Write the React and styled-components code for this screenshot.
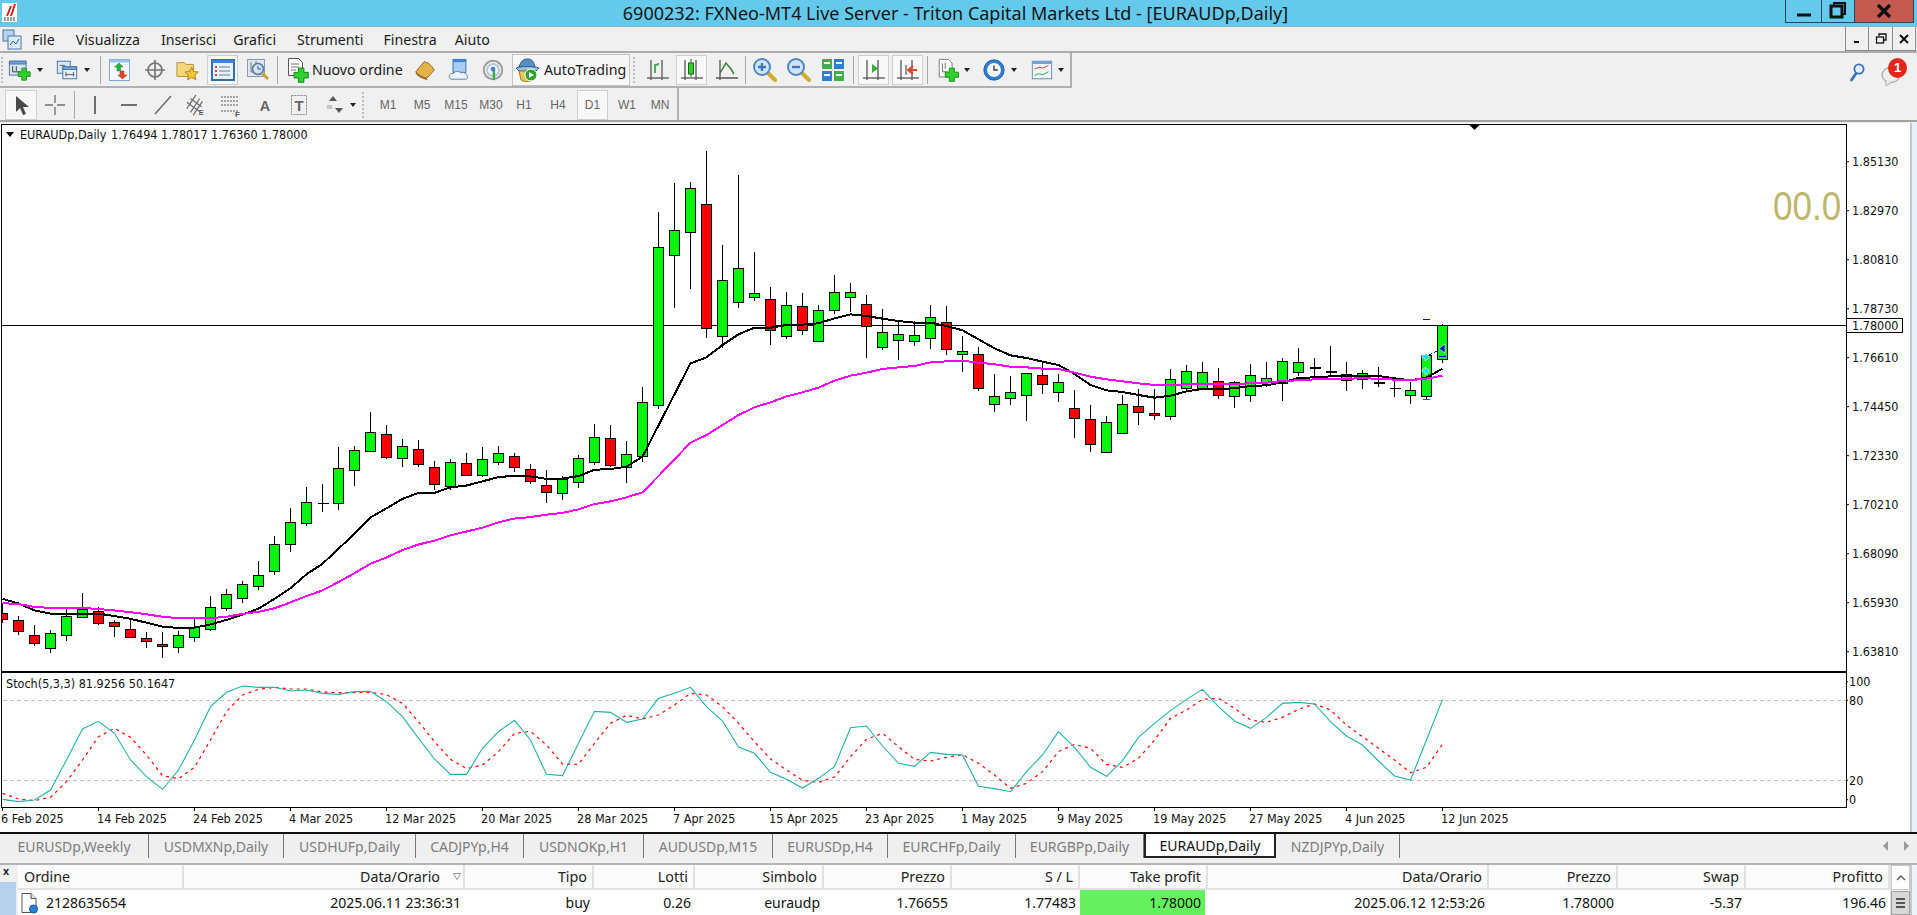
import React from "react";
import styled, { createGlobalStyle } from "styled-components";

const Global = createGlobalStyle`
  html, body { margin: 0; padding: 0; background: #f0f0f0; overflow: hidden; }
  * { box-sizing: border-box; }
`;
const UI = `"Noto Sans", "Liberation Sans", sans-serif`;
const CHART = `"DejaVu Sans", "Liberation Sans", sans-serif`;

const Page = styled.div`
  width: 1917px; height: 915px; overflow: hidden; display: flex; flex-direction: column;
  background: #f0f0f0; font-family: ${UI}; color: #111;
`;
const TitleBar = styled.header`
  height: 27px; flex: none; background: #65c9eb; display: flex; align-items: flex-start; position: relative;
  border-bottom: 1px solid #8fb4c4;
`;
const Logo = styled.div`
  width: 15px; height: 19px; margin: 3px 0 0 2px; background: #fff; flex: none; display: flex;
`;
const TitleText = styled.div`
  flex: 1; text-align: center; font-size: 18px; line-height: 26px; padding-left: 109px; white-space: nowrap; color: #151515;
`;
const WinBtn = styled.div`
  width: ${p => p.$w}px; height: 23px; flex: none; display: flex; align-items: center; justify-content: center;
  border: 1px solid #24495a; border-top: none; border-left-width: ${p => (p.$first ? 1 : 0)}px;
  background: ${p => p.$bg || "transparent"};
`;
const WinGroup = styled.div`display: flex; margin-right: 3px;`;

const MenuBar = styled.nav`
  height: 26px; flex: none; display: flex; align-items: center; border-bottom: 2px solid #ababab; position: relative;
`;
const MenuIconBox = styled.div`width: 24px; padding-left: 2px; flex: none; display: flex;`;
const MenuItem = styled.span`
  font-size: 14.2px; margin-left: ${p => p.$ml}px; white-space: nowrap; color: #1c1c1c;
`;
const MdiGroup = styled.div`display: flex; margin-left: auto; margin-right: 1px; align-self: flex-start;`;
const MdiBtn = styled.div`
  width: ${p => p.$w}px; height: 24px; display: flex; align-items: center; justify-content: center;
  border: 1px solid #8a8a8a; border-top: none; border-left-width: ${p => (p.$first ? 1 : 0)}px; background: #f0f0f0;
`;

const ToolRow = styled.div`
  height: ${p => p.$h}px; flex: none; display: flex; align-items: stretch;
  border-bottom: ${p => p.$b}px solid #a2a2a2;
`;
const ToolBar = styled.div`
  width: ${p => p.$w}px; flex: none; display: flex; align-items: center;
  padding-top: ${p => p.$pt || 0}px;
  border-bottom: ${p => (p.$line ? "2px solid #b0b0b0" : "none")};
  border-right: 2px solid #b0b0b0;
`;
const Grip = styled.div`
  width: ${p => p.$w}px; height: 26px; flex: none; display: flex; justify-content: center;
  &::before { content: ""; width: 3px; height: 100%; border-left: 2px dotted #bdbdbd; }
`;
const Sp = styled.div`width: ${p => p.$w}px; flex: none;`;
const Sep = styled.div`
  width: ${p => p.$w}px; height: 28px; flex: none; display: flex; justify-content: center;
  &::before { content: ""; width: 1px; height: 100%; background: #a8a8a8; }
`;
const Btn = styled.div`
  width: ${p => p.$w}px; height: 30px; flex: none; display: flex; align-items: center; justify-content: center;
  border: 1px solid ${p => (p.$on ? "#cfcfcf" : "transparent")};
  background: ${p => (p.$on ? "#f8f8f8" : "transparent")};
`;
const Dd = styled.div`
  width: ${p => p.$w}px; height: 30px; flex: none; display: flex; align-items: center; justify-content: center;
  &::before { content: ""; border-left: 3.5px solid transparent; border-right: 3.5px solid transparent; border-top: 4px solid #222; }
`;
const TextBtn = styled.div`
  width: ${p => p.$w}px; height: 32px; flex: none; display: flex; align-items: center; gap: ${p => p.$gap}px;
  padding-left: ${p => p.$pl}px; font-size: 14.2px; white-space: nowrap; color: #1a1a1a;
  border: 1px solid ${p => (p.$on ? "#c4c4c4" : "transparent")};
  background: ${p => (p.$on ? "#f7f7f7" : "transparent")};
`;
const Tf = styled.div`
  width: ${p => p.$w}px; height: 30px; flex: none; display: flex; align-items: center; justify-content: center;
  font-size: 12px; color: #666; font-family: "Liberation Sans", sans-serif; letter-spacing: 0;
  border: 1px solid ${p => (p.$on ? "#cfcfcf" : "transparent")};
  background: ${p => (p.$on ? "#f8f8f8" : "transparent")};
`;
const RightTools = styled.div`
  margin-left: auto; padding-right: 10px; display: flex; align-items: center; gap: 13px;
`;
const ChatBox = styled.div`width: 26px; height: 32px; position: relative; flex: none; display: flex; align-items: flex-end;`;
const Badge = styled.span`
  position: absolute; right: 0; top: 3px; width: 19px; height: 20px; border-radius: 50%; background: #e2261b;
  color: #fff; font: bold 13px/20px "Liberation Sans", sans-serif; text-align: center;
`;

const ChartArea = styled.main`
  height: 711px; flex: none; margin-top: 1px; display: flex; background: #fff; border-bottom: 2px solid #111;
`;
const ChartSvg = styled.svg`width: 1910px; height: 709px; display: block; flex: none; background: #fff;`;
const RightStrip = styled.div`flex: 1; background: #e8f0fb; border-left: 2px solid #c8c8c8;`;
const AxisText = styled.text`
  font-family: ${CHART}; font-stretch: condensed; font-size: ${p => p.$s || 12.5}px; fill: ${p => p.$c || "#111"};
`;
const BigText = styled.text`
  font-family: "Liberation Sans", sans-serif; font-size: 35px; fill: #bdb76b;
`;

const Tabs = styled.div`
  height: 25px; flex: none; display: flex; background: #efefef; position: relative;
`;
const Tab = styled.div`
  width: ${p => p.$w}px; height: 24px; flex: none; display: flex; align-items: center; justify-content: center;
  font-size: 14px; white-space: nowrap; color: ${p => (p.$on ? "#111" : "#7d7d7d")};
  background: ${p => (p.$on ? "#fff" : "transparent")};
  border-right: ${p => (p.$on ? "2px solid #222" : "1px solid #777")};
  border-bottom: ${p => (p.$on ? "2px solid #222" : "none")};
  border-left: ${p => (p.$on ? "2px solid #222" : "none")};
`;
const TabArrows = styled.div`
  margin-left: auto; margin-right: 8px; display: flex; gap: 16px; align-items: center; height: 24px;
`;
const TabArrow = styled.span`
  width: 0; height: 0; border-top: 5px solid transparent; border-bottom: 5px solid transparent;
  ${p => (p.$dir === "l" ? "border-right: 5px solid #9a9a9a;" : "border-left: 5px solid #9a9a9a;")}
`;

const Terminal = styled.section`
  flex: 1; margin-top: 4px; display: flex; border-top: 2px solid #b4b4b4; min-height: 0;
`;
const TermSide = styled.div`
  width: 18px; flex: none; display: flex; flex-direction: column; align-items: stretch;
`;
const CloseX = styled.span`
  height: 17px; flex: none; font: bold 11px/13px "Liberation Sans", sans-serif; padding-left: 3px; color: #111;
`;
const SideBlue = styled.div`flex: 1; width: 16px; background: #b6d1ec;`;
const Grid = styled.div`
  width: 1872px; flex: none; display: grid; align-content: start; background: #fff;
  grid-template-columns: 166px 281px 129px 101px 129px 128px 128px 128px 281px 129px 128px 144px;
  grid-template-rows: 25px 25px;
`;
const Head = styled.div`
  display: flex; align-items: center; justify-content: ${p => (p.$left ? "flex-start" : "flex-end")}; gap: 13px;
  padding: 0 5px 0 6px; font-size: 14.3px; white-space: nowrap; color: #222; background: #fbfbfb;
  border-right: 2px solid #e2e2e2; border-bottom: 2px solid #e2e2e2;
`;
const Cell = styled.div`
  display: flex; align-items: center; justify-content: ${p => (p.$left ? "flex-start" : "flex-end")}; gap: 7px;
  padding: 0 4px 0 ${p => (p.$left ? 2 : 4)}px; font-size: 14px; white-space: nowrap; color: #111;
  background: ${p => p.$bg || "#fff"};
  margin-right: ${p => (p.$bg ? 3 : 0)}px;
`;
const SortMark = styled.svg`width: 8px; height: 7px; margin-right: -3px; display: block; flex: none;`;
const Scroll = styled.div`
  width: 20px; flex: none; display: flex; flex-direction: column; border-left: 1px solid #e0e0e0; background: #f0f0f0;
`;
const ScrollUp = styled.div`
  height: 25px; flex: none; display: flex; align-items: center; justify-content: center; background: #fff; border: 1px solid #c9c9c9;
`;
const Thumb = styled.div`
  flex: 1; margin-top: 1px; background: #d8d8d8; border: 1px solid #9f9f9f; display: flex; flex-direction: column; align-items: center; justify-content: center; gap: 2px;
`;
const ThumbLine = styled.i`width: 9px; height: 2px; background: #555; display: block;`;
const StripR = styled.div`flex: 1; background: #eef3fa; border-left: 2px solid #c8c8c8;`;

/* ---------- icons ---------- */
const Ico = ({ children, w = 26, h = 26 }) => (
  <svg width={w} height={h} viewBox="0 0 26 26" style={{ display: "block" }}>{children}</svg>
);
const Plus = ({ x = 13, y = 13, s = 1 }) => (
  <path transform={`translate(${x} ${y}) scale(${s})`} d="M4 0h5v4h4v5H9v4H4V9H0V4h4z" fill="#2fd02f" stroke="#168a16" strokeWidth=".9" />
);
const Axes = ({ c = "#555" }) => (
  <g stroke={c} strokeWidth="1.3" fill="none"><path d="M6 3v20M17 3v20" /><path d="M2 21h22" /></g>
);
const LogoIcon = () => (
  <svg width="15" height="19" viewBox="0 0 15 19">
    <path d="M4 13 8 3h2L6 13zM8 13 12 1h2l-4 12z" fill="#d2231c" />
    <path d="M2 15h11M2 17h11" stroke="#333" strokeWidth="1" strokeDasharray="2 1" />
  </svg>
);
const MdiIcon = () => (
  <svg width="20" height="21" viewBox="0 0 20 21">
    <rect x="1" y="1" width="11" height="11" fill="#b9d3ee" stroke="#4a76a8" />
    <rect x="6" y="7" width="13" height="13" fill="#dfeaf7" stroke="#4a76a8" />
    <path d="M8 16l3-4 3 3 3-5" stroke="#2c64a8" fill="none" />
  </svg>
);
const NewChart = () => (
  <Ico>
    <rect x="1.5" y="3.5" width="18" height="15" fill="#d6e6f7" stroke="#3e70a6" />
    <path d="M1.5 3.5h18v3h-18z" fill="#79a8d8" stroke="#3e70a6" />
    <path d="M5 9v6M5 15h8M9 9v5" stroke="#333" fill="none" />
    <Plus x={11} y={11} />
  </Ico>
);
const Profiles = () => (
  <Ico>
    <rect x="2.5" y="3.5" width="14" height="13" fill="#d6e6f7" stroke="#3e70a6" />
    <rect x="8.5" y="9.5" width="15" height="13" fill="#e8f1fb" stroke="#3e70a6" />
    <path d="M8.5 9.5h15v3h-15z" fill="#79a8d8" stroke="#3e70a6" />
    <path d="M5 8h6M12 15v5M20 15v5M11 18h10" stroke="#555" fill="none" />
  </Ico>
);
const MarketWatch = () => (
  <Ico>
    <rect x="2.5" y="2.5" width="20" height="21" fill="#f6fafe" stroke="#7fa7cf" />
    <path d="M2.5 2.5h20v3h-20z" fill="#9cc3e8" />
    <path d="M10 14V10H7.5L12 6l4 4h-2.5v4z" fill="#22b53a" stroke="#147a25" strokeWidth=".5" />
    <path d="M13 14v4h-2l4.5 4 4.5-4h-3v-4z" fill="#e0492d" stroke="#a02a14" strokeWidth=".5" />
  </Ico>
);
const Cross = () => (
  <Ico>
    <circle cx="13" cy="13" r="7" fill="none" stroke="#777" strokeWidth="1.7" />
    <path d="M13 3v20M3 13h20" stroke="#777" strokeWidth="1.7" />
  </Ico>
);
const FolderStar = () => (
  <Ico>
    <path d="M1 5h8l2 2h8v13H1z" fill="#f3d77a" stroke="#b18f2b" />
    <path d="M17 10l2.2 4.6 5 .6-3.7 3.4 1 5-4.5-2.5-4.5 2.5 1-5-3.7-3.4 5-.6z" fill="#f5c437" stroke="#a9801a" />
  </Ico>
);
const Navigator = () => (
  <Ico>
    <rect x="2" y="3" width="22" height="20" fill="#e9f2fb" stroke="#2f6eb0" strokeWidth="2" />
    <path d="M2 3h22v3H2z" fill="#3f86cf" />
    <path d="M9 10h11M9 14h11M9 18h11" stroke="#5a7ea6" />
    <path d="M5 10h2M5 14h2M5 18h2" stroke="#d9472d" strokeWidth="2" />
  </Ico>
);
const Tester = () => (
  <Ico>
    <rect x="2.5" y="2.5" width="17" height="17" fill="#dfe6ee" stroke="#8a97a5" />
    <path d="M6 5v10M6 15h10M11 4v8" stroke="#777" fill="none" />
    <circle cx="13" cy="12" r="5.5" fill="#cfe3f6" stroke="#5b7a9a" strokeWidth="1.6" />
    <path d="M17 16l6 6" stroke="#c9a23b" strokeWidth="3" />
    <path d="M13 9v3h3" stroke="#3b5c80" fill="none" />
  </Ico>
);
const NewOrder = () => (
  <Ico>
    <path d="M4.5 1.5h10l4 4v13h-14z" fill="#fff" stroke="#555" />
    <path d="M7 7h8M7 10h8M7 13h5" stroke="#777" />
    <Plus x={10} y={11} s={1.1} />
  </Ico>
);
const Book = () => (
  <Ico>
    <path d="M3 15 12 4c5 1 8 4 11 9l-8 9C11 21 6 19 3 15z" fill="#e3b34a" stroke="#8a5f1a" />
    <path d="M3 15c3 4 8 6 12 7l1 2c-5-1-10-3-13-7z" fill="#a06b20" />
  </Ico>
);
const Cloud = () => (
  <Ico>
    <rect x="6.5" y="1.5" width="14" height="14" fill="#a8cff2" stroke="#2f6eb0" />
    <path d="M6.5 1.5h14v3h-14z" fill="#3f86cf" />
    <path d="M3 22c-2-3 1-6 4-5 1-3 6-3 8-1 3-1 7 1 7 4 1 2-1 3-2 3H5z" fill="#eef3f9" stroke="#5d7ea3" />
  </Ico>
);
const Signal = () => (
  <Ico>
    <g fill="none" stroke="#9a9a9a" strokeWidth="2">
      <circle cx="13" cy="13" r="10" /><circle cx="13" cy="13" r="6.5" stroke="#b9c7d6" />
    </g>
    <path d="M14 24V13" stroke="#3fae3f" strokeWidth="2.6" />
    <circle cx="13" cy="12" r="2.6" fill="#3f86cf" />
  </Ico>
);
const AutoIcon = () => (
  <Ico>
    <path d="M5 10c2-6 4-8 9-8 4 0 6 3 7 8z" fill="#5a8fc4" stroke="#2d5c8c" />
    <path d="M2 11c5-2 18-2 23 0l-3 3H5z" fill="#9bc0de" stroke="#2d5c8c" />
    <path d="M5 14h16l-2 9c-4 2-9 2-12 0z" fill="#e6c65a" stroke="#9a7f22" />
    <circle cx="17" cy="18" r="6" fill="#2fa32f" stroke="#fff" />
    <path d="M15 15l5 3-5 3z" fill="#fff" />
  </Ico>
);
const BarChart = () => (
  <Ico><Axes /><path d="M10 16V8h3M13 8V6" stroke="#2a9b3c" strokeWidth="1.6" fill="none" /></Ico>
);
const CandleChart = () => (
  <Ico><Axes /><rect x="9.5" y="6" width="5" height="11" fill="#2fd02f" stroke="#156a15" /><path d="M12 2v4M12 17v3" stroke="#156a15" /></Ico>
);
const LineChart = () => (
  <Ico><g stroke="#555" strokeWidth="1.3" fill="none"><path d="M6 3v20M2 21h22" /></g><path d="M6 16 12 6l5 6 3 5" stroke="#3f7f3f" strokeWidth="1.5" fill="none" /></Ico>
);
const Magnifier = ({ minus }) => (
  <Ico>
    <path d="M16 16l7 7" stroke="#d6a92f" strokeWidth="4" strokeLinecap="round" />
    <circle cx="10" cy="10" r="8" fill="#cfe4f7" stroke="#4d88c2" strokeWidth="2" />
    <path d={minus ? "M6 10h8" : "M6 10h8M10 6v8"} stroke="#3c78b5" strokeWidth="2.4" />
  </Ico>
);
const Tile = () => (
  <Ico>
    <rect x="2" y="2" width="10" height="10" fill="#3fb04a" /><rect x="14" y="2" width="10" height="10" fill="#2f7fd0" />
    <rect x="2" y="14" width="10" height="10" fill="#2f7fd0" /><rect x="14" y="14" width="10" height="10" fill="#3fb04a" />
    <path d="M4 6h6M16 6h6M4 18h6M16 18h6" stroke="#fff" strokeWidth="2" />
  </Ico>
);
const AutoScroll = () => (<Ico><Axes /><path d="M11 7v9l6-4.5z" fill="#2fb52f" /></Ico>);
const Shift = () => (<Ico><Axes /><path d="M14 13h8M18 9l-5 4 5 4" stroke="#d9472d" strokeWidth="2" fill="none" /><path d="M11 8v10" stroke="#444" /></Ico>);
const Indicators = () => (
  <Ico>
    <path d="M3.5 1.5h10l4 4v15h-14z" fill="#fff" stroke="#777" />
    <path d="M7 6v9h6M10 5v7" stroke="#666" fill="none" />
    <Plus x={10} y={11} s={1.1} />
  </Ico>
);
const Clock = () => (
  <Ico>
    <circle cx="13" cy="13" r="11" fill="#2f7fd0" stroke="#1c5a9e" />
    <circle cx="13" cy="13" r="7.5" fill="#f5f5f5" />
    <path d="M13 8v5h4" stroke="#333" strokeWidth="1.4" fill="none" />
  </Ico>
);
const Template = () => (
  <Ico>
    <rect x="2.5" y="3.5" width="21" height="19" fill="#eef4fb" stroke="#5f86ad" />
    <path d="M2.5 3.5h21v3h-21z" fill="#6fa3d6" />
    <path d="M5 12l5-2 4 1 6-3" stroke="#c0392b" fill="none" />
    <path d="M5 19l4-2 5 1 6-3" stroke="#3aa13a" fill="none" />
  </Ico>
);
const Cursor = () => (<Ico><path d="M8 4v16l4-4 3 7 3-1-3-7h6z" fill="#4a4a4a" /></Ico>);
const Thin = () => (<Ico><path d="M13 3v20M3 13h20" stroke="#6e6e6e" strokeWidth="1.3" /><path d="M11 11h4v4h-4z" fill="#f0f0f0" /></Ico>);
const VLine = () => (<Ico><path d="M13 4v18" stroke="#6e6e6e" strokeWidth="2" /></Ico>);
const HLine = () => (<Ico><path d="M5 13h16" stroke="#6e6e6e" strokeWidth="2" /></Ico>);
const Trend = () => (<Ico><path d="M5 22 21 4" stroke="#6e6e6e" strokeWidth="1.6" /></Ico>);
const Equi = () => (
  <Ico>
    <path d="M3 17 13 2M7 21 17 6M10 24 20 9M3 10l14 10M7 6l12 9" stroke="#6e6e6e" strokeWidth="1.3" />
    <text x="16" y="24" fontFamily="Liberation Sans" fontWeight="700" fontSize="8" fill="#555">E</text>
  </Ico>
);
const FibIcon = () => (
  <Ico>
    <path d="M3 5h18M3 9h18M3 13h18M3 19h18" stroke="#8a8a8a" strokeDasharray="2 1" strokeWidth="1.3" />
    <text x="17" y="25" fontFamily="Liberation Sans" fontWeight="700" fontSize="8" fill="#555">F</text>
  </Ico>
);
const TextA = () => (<Ico><text x="13" y="20" textAnchor="middle" fontFamily="Liberation Sans" fontWeight="700" fontSize="17" fill="#666">A</text></Ico>);
const TextT = () => (
  <Ico>
    <rect x="5.5" y="3.5" width="15" height="19" fill="none" stroke="#888" strokeDasharray="2 1" />
    <text x="13" y="19" textAnchor="middle" fontFamily="Liberation Sans" fontWeight="700" fontSize="15" fill="#666">T</text>
  </Ico>
);
const Arrows = () => (
  <Ico>
    <path d="M7 9 11 4l4 5z" fill="#555" /><path d="M13 21l4-5 4 5z" transform="rotate(180 17 18.5)" fill="#555" />
    <path d="M5 14h5M5 16h5" stroke="#9a9a9a" />
  </Ico>
);
const Search = () => (
  <svg width="23" height="26" viewBox="0 0 23 26">
    <circle cx="14" cy="11" r="4.6" fill="#e6f0fa" stroke="#3a6fc0" strokeWidth="1.8" />
    <path d="M11 15.5 6.5 22" stroke="#3a6fc0" strokeWidth="2.8" strokeLinecap="round" />
  </svg>
);
const Bubble = () => (
  <svg width="22" height="24" viewBox="0 0 22 24">
    <ellipse cx="10" cy="12" rx="9" ry="7.5" fill="#eee" stroke="#b0b0b0" strokeWidth="1.4" />
    <path d="M5 18v5l6-4" fill="#eee" stroke="#b0b0b0" />
  </svg>
);
const DocIcon = () => (
  <svg width="19" height="22" viewBox="0 0 18 22">
    <path d="M1.5 1.5h9l5 5v14h-14z" fill="#fff" stroke="#555" />
    <path d="M10.5 1.5v5h5" fill="#e4e4e4" stroke="#555" />
    <circle cx="13" cy="17" r="4" fill="#2a7fd4" stroke="#0f5aa6" />
  </svg>
);

/* ---------- chart data (reference pixel space) ---------- */
const xOf = k => 2.5 + 16 * k;
const yA = z => 120 + z * 0.3508;
const yB = z => 120 + z / 3;
const yC = z => 300 + z / 3;
const CA = [
  [1380,1406,1424,1435,"r"],[1415,1426,1458,1467,"r"],[1440,1469,1492,1500,"r"],[1455,1465,1506,1519,"g"],
  [1395,1415,1470,1484,"g"],[1348,1396,1418,1421,"g"],[1387,1402,1436,1440,"r"],[1424,1433,1444,1473,"r"],
  [1425,1453,1475,1478,"r"],[1460,1478,1487,1504,"r"],[1460,1495,1501,1533,"r"],[1457,1469,1503,1518,"g"],
  [1423,1447,1475,1487,"g"],[1357,1389,1452,1458,"g"],[1338,1352,1392,1400,"g"],[1315,1324,1364,1376,"g"],
  [1258,1298,1330,1339,"g"],[1187,1210,1287,1296,"g"],[1106,1147,1210,1231,"g"],[1047,1090,1151,1156,"g"],
  [1038,1093,1093,1118,"k"],[932,993,1093,1111,"g"],[928,942,999,1042,"g"],[832,890,945,947,"g"],
  [870,896,963,965,"r"],[908,931,965,988,"g"],[912,939,983,990,"r"],[972,990,1039,1055,"r"],
  [965,976,1046,1055,"g"],[950,979,1013,1015,"r"],[933,967,1013,1017,"g"],[930,950,976,983,"g"],
  [948,959,990,1003,"r"],[981,996,1030,1037,"r"],[998,1042,1062,1091,"r"],[1015,1024,1064,1083,"g"],
  [956,965,1033,1048,"g"],[867,905,976,983,"g"],[870,908,985,990,"r"],
];
const CB = [
  [964,1003,1042,1090,"g"],[802,847,1010,1025,"g"],[277,382,857,866,"g"],[190,331,407,563,"g"],[186,205,338,507,"g"],
  [93,253,625,653,"r"],[376,481,650,685,"g"],[166,445,548,563,"g"],[397,519,533,543,"g"],[502,538,632,675,"r"],
  [517,556,650,656,"g"],[520,559,632,644,"r"],[556,571,664,664,"g"],[465,517,571,581,"g"],[489,517,533,576,"g"],
  [526,553,620,714,"r"],[568,637,683,690,"g"],[605,643,662,720,"g"],[604,646,665,678,"g"],[556,592,656,686,"g"],
  [559,607,689,705,"r"],[649,694,704,755,"g"],[682,703,806,812,"r"],[762,829,854,875,"g"],[768,817,836,854,"g"],
  [758,760,827,902,"g"],[730,766,794,822,"r"],[763,787,818,846,"g"],[811,865,896,953,"r"],[855,898,973,995,"r"],
  [888,907,998,998,"g"],[825,853,941,941,"g"],[808,859,878,914,"r"],[807,880,887,900,"r"],[747,778,889,899,"g"],
];
const CC = [
  [195,214,265,275,"g"],[186,217,265,268,"g"],[205,244,287,296,"r"],[244,247,290,323,"g"],[192,226,287,305,"g"],
  [186,235,246,262,"g"],[174,184,250,302,"g"],[144,187,217,228,"g"],[174,204,204,232,"K"],[138,215,215,228,"K"],
  [186,223,241,272,"g"],[210,220,238,266,"g"],[201,248,248,260,"K"],[243,265,265,290,"k"],[246,271,287,311,"g"],
  [162,167,290,296,"g"],[72,77,178,188,"g"],
];
const candles = [
  ...CA.map((c, i) => ({ k: i, h: yA(c[0]), t: yA(c[1]), b: yA(c[2]), l: yA(c[3]), c: c[4] })),
  ...CB.map((c, i) => ({ k: i + 39, h: yB(c[0]), t: yB(c[1]), b: yB(c[2]), l: yB(c[3]), c: c[4] })),
  ...CC.map((c, i) => ({ k: i + 74, h: yC(c[0]), t: yC(c[1]), b: yC(c[2]), l: yC(c[3]), c: c[4] })),
];
const polyA = a => a.map((p, i) => `${i * 16 + 2.5},${yA(p)}`);
const polyB = (a, s) => a.map((p, i) => `${(i + s) * 16 + 2.5},${yB(p)}`);
const polyC = (a, s) => a.map((p, i) => `${(i + s) * 16 + 2.5},${yC(p)}`);
const black = [
  ...polyA([1365,1378,1398,1407,1407,1407,1407,1414,1422,1433,1444,1448,1447,1438,1425,1410,1393,1365,1335,1295,1265,1222,1180,1133,1107,1080,1063,1063,1047,1042,1030,1018,1014,1016,1023,1022,1015,997,995]),
  ...polyB([1040,1010,916,823,730,712,675,643,623,623,615,614,610,595,583,588,596,603,608,608,618,631,658,685,706,714,725,735,762,795,811,816,825,833,827], 39),
  ...polyC([274,267,267,265,258,256,247,234,232,229,229,228,228,235,241,233,206], 74),
].join(" ");
const magenta = [
  ...polyA([1377,1380,1388,1391,1391,1391,1394,1398,1403,1409,1416,1420,1420,1420,1416,1408,1402,1392,1375,1357,1341,1317,1292,1265,1247,1226,1210,1199,1184,1173,1162,1147,1136,1132,1125,1120,1110,1095,1087]),
  ...polyB([1132,1117,1068,1018,968,945,915,885,862,847,829,817,803,782,767,758,747,742,738,727,724,722,728,733,740,742,746,747,758,770,778,784,790,795,795], 39),
  ...polyC([253,252,252,252,250,248,243,241,238,236,236,235,236,239,240,236,227], 74),
].join(" ");
const yS = z => 660 + z / 3;
const stochPts = a => a.map((p, i) => `${i * 16 + 2.5},${yS(p)}`).join(" ");
const teal = stochPts([418,425,420,390,300,207,184,220,300,350,388,330,240,140,97,78,82,82,93,90,100,103,95,94,125,170,235,297,343,343,265,215,181,240,343,347,250,154,157,187,177,115,100,82,140,183,261,280,337,358,384,355,320,203,198,258,310,319,277,283,285,379,386,395,335,285,215,262,322,349,302,232,190,152,118,88,140,183,205,172,130,127,132,185,228,255,303,348,360,240,118]);
const redS = stochPts([400,417,422,412,365,300,230,205,232,285,347,356,322,240,155,105,88,82,87,87,96,98,98,97,104,130,185,245,298,326,315,275,220,214,255,312,313,250,190,166,177,165,135,100,105,140,190,245,297,330,361,367,351,290,238,220,260,298,303,292,284,310,345,385,370,335,275,253,265,313,322,295,240,175,150,118,115,145,180,187,172,148,132,150,195,230,265,300,338,322,252]);
const prices = ["1.85130","1.82970","1.80810","1.78730","1.76610","1.74450","1.72330","1.70210","1.68090","1.65930","1.63810"];
const dates = ["6 Feb 2025","14 Feb 2025","24 Feb 2025","4 Mar 2025","12 Mar 2025","20 Mar 2025","28 Mar 2025","7 Apr 2025","15 Apr 2025","23 Apr 2025","1 May 2025","9 May 2025","19 May 2025","27 May 2025","4 Jun 2025","12 Jun 2025"];
const stochAxis = [["100", 681.7], ["80", 700.3], ["20", 780.3], ["0", 799.7]];
const FILL = { g: "#06f30e", r: "#ff0000" };

const Chart = () => (
  <ChartSvg viewBox="0 123 1910 709">
    <defs><clipPath id="plot"><rect x="2" y="125" width="1844" height="546" /></clipPath></defs>
    <rect x="1" y="124" width="1845" height="547" fill="#fff" stroke="#000" strokeWidth="1" shapeRendering="crispEdges" />
    <rect x="1" y="672" width="1845" height="135" fill="#fff" stroke="#000" strokeWidth="1" shapeRendering="crispEdges" />
    <path d="M1468.5 124h12l-6 6z" fill="#000" />
    <BigText transform="translate(1773 220) scale(1 1.15)">00.0</BigText>
    <path d="M2 325H1846" stroke="#000" strokeWidth="1" shapeRendering="crispEdges" />
    <g clipPath="url(#plot)" shapeRendering="crispEdges">
      {candles.map(c => (
        <g key={c.k}>
          <path d={`M${xOf(c.k)} ${c.h}V${c.l}`} stroke="#000" strokeWidth="1.2" />
          {c.c === "k" || c.c === "K" ? (
            <path d={`M${xOf(c.k) - 5} ${c.t}h11`} stroke="#000" strokeWidth={c.c === "K" ? 2 : 1} />
          ) : (
            <rect x={xOf(c.k) - 5} y={c.t} width={10} height={c.b - c.t} fill={FILL[c.c]} stroke="#000" strokeWidth="1" />
          )}
        </g>
      ))}
      <polyline points={black} fill="none" stroke="#000" strokeWidth="2" />
      <polyline points={magenta} fill="none" stroke="#ff00ff" strokeWidth="2" />
      <path d="M1423 319.3h7" stroke="#0000dd" strokeWidth="1" />
      <path d="M1423 399.3h7" stroke="#e01010" strokeWidth="1" />
      <path d="M1439 356.3h7" stroke="#0000dd" strokeWidth="1" />
      <path d="M1429 355l12-6" stroke="#0000dd" strokeWidth="1" strokeDasharray="3 3" />
    </g>
    <path d="M1422 351l4-3v2h3v3h-3v3l-4-3z" transform="matrix(-1 0 0 1 2851 5)" fill="#00e5ff" stroke="#fff" strokeWidth=".6" />
    <path d="M1422 365l4-3v2h3v3h-3v3l-4-3z" transform="matrix(-1 0 0 1 2851 5)" fill="#00e5ff" stroke="#fff" strokeWidth=".6" />
    <path d="M1445 344v9l-6-4.500z" fill="#0000cc" stroke="#fff" strokeWidth=".6" />
    <AxisText x="20" y="138.500">EURAUDp,Daily</AxisText>
    <AxisText x="111" y="138.500">1.76494 1.78017 1.76360 1.78000</AxisText>
    <path d="M6 132h8l-4 5z" fill="#000" />
    <AxisText x="6" y="687.500">Stoch(5,3,3) 81.9256 50.1647</AxisText>
    {prices.map((p, i) => (
      <g key={p}>
        <path d={`M1846 ${161.7 + 49 * i}h3`} stroke="#000" />
        <AxisText x="1852" y={166 + 49 * i}>{p}</AxisText>
      </g>
    ))}
    <rect x="1846.500" y="318.500" width="56" height="14" fill="#fff" stroke="#000" shapeRendering="crispEdges" />
    <AxisText x="1852" y="330">1.78000</AxisText>
    <path d="M3 700.3H1846M3 780.3H1846" stroke="#c4c4c4" strokeDasharray="4 3" shapeRendering="crispEdges" />
    <polyline points={redS} fill="none" stroke="#ff0000" strokeDasharray="3 4" strokeWidth="1.2" />
    <polyline points={teal} fill="none" stroke="#20b2aa" strokeWidth="1.1" />
    {stochAxis.map(([t, y]) => (
      <g key={t}>
        <path d={`M1846 ${y}h2`} stroke="#000" />
        <AxisText x="1849" y={y + 4.500}>{t}</AxisText>
      </g>
    ))}
    {dates.map((d, i) => (
      <g key={d}>
        <path d={`M${xOf(i * 6)} 807v4`} stroke="#000" shapeRendering="crispEdges" />
        <AxisText x={xOf(i * 6) - 1.500} y="822.500">{d}</AxisText>
      </g>
    ))}
  </ChartSvg>
);

const TABS = [
  ["EURUSDp,Weekly", 149], ["USDMXNp,Daily", 135], ["USDHUFp,Daily", 132], ["CADJPYp,H4", 108], ["USDNOKp,H1", 120],
  ["AUDUSDp,M15", 129], ["EURUSDp,H4", 115], ["EURCHFp,Daily", 128], ["EURGBPp,Daily", 128],
  ["EURAUDp,Daily", 132, true], ["NZDJPYp,Daily", 124],
];
const HEADS = [["Ordine", true], ["Data/Orario"], ["Tipo"], ["Lotti"], ["Simbolo"], ["Prezzo"], ["S / L"], ["Take profit"], ["Data/Orario"], ["Prezzo"], ["Swap"], ["Profitto"]];

export default function App() {
  return (
    <Page>
      <Global />
      <TitleBar>
        <Logo><LogoIcon /></Logo>
        <TitleText>6900232: FXNeo-MT4 Live Server - Triton Capital Markets Ltd - [EURAUDp,Daily]</TitleText>
        <WinGroup>
          <WinBtn $w={37} $first>
            <svg width="16" height="16" viewBox="0 0 16 16"><path d="M1 12h14" stroke="#111" strokeWidth="3" /></svg>
          </WinBtn>
          <WinBtn $w={33}>
            <svg width="18" height="18" viewBox="0 0 18 18"><path d="M5 4V1h11v11h-3" fill="none" stroke="#111" strokeWidth="2" /><rect x="2" y="4" width="11" height="11" fill="none" stroke="#111" strokeWidth="3" /></svg>
          </WinBtn>
          <WinBtn $w={59} $bg="#c55a50">
            <svg width="16" height="16" viewBox="0 0 16 16"><path d="M2 2l12 12M14 2 2 14" stroke="#111" strokeWidth="3.2" /></svg>
          </WinBtn>
        </WinGroup>
      </TitleBar>
      <MenuBar>
        <MenuIconBox><MdiIcon /></MenuIconBox>
        <MenuItem $ml={8}>File</MenuItem>
        <MenuItem $ml={21}>Visualizza</MenuItem>
        <MenuItem $ml={21}>Inserisci</MenuItem>
        <MenuItem $ml={17}>Grafici</MenuItem>
        <MenuItem $ml={21}>Strumenti</MenuItem>
        <MenuItem $ml={20}>Finestra</MenuItem>
        <MenuItem $ml={18}>Aiuto</MenuItem>
        <MdiGroup>
          <MdiBtn $w={24} $first><svg width="10" height="10" viewBox="0 0 10 10"><path d="M2 8h5" stroke="#111" strokeWidth="2" /></svg></MdiBtn>
          <MdiBtn $w={24}><svg width="12" height="12" viewBox="0 0 12 12"><path d="M4 3V1h7v6H8" fill="none" stroke="#111" strokeWidth="1.300" /><rect x="1.500" y="4" width="7" height="6" fill="none" stroke="#111" strokeWidth="1.300" /></svg></MdiBtn>
          <MdiBtn $w={23}><svg width="10" height="10" viewBox="0 0 10 10"><path d="M1 1l8 8M9 1 1 9" stroke="#111" strokeWidth="2" /></svg></MdiBtn>
        </MdiGroup>
      </MenuBar>
      <ToolRow $h={35} $b={0}>
        <ToolBar $w={1072} $line>
          <Grip $w={7} />
          <Btn $w={26}><NewChart /></Btn><Dd $w={14} /><Sp $w={7} />
          <Btn $w={26}><Profiles /></Btn><Dd $w={13} /><Sp $w={2} /><Sep $w={10} />
          <Btn $w={30}><MarketWatch /></Btn><Btn $w={40}><Cross /></Btn><Btn $w={26}><FolderStar /></Btn><Sp $w={6} />
          <Btn $w={31} $on><Navigator /></Btn><Sp $w={4} /><Btn $w={32}><Tester /></Btn><Sep $w={6} />
          <TextBtn $w={125} $gap={2} $pl={3}><NewOrder />Nuovo ordine</TextBtn><Sp $w={7} />
          <Btn $w={26}><Book /></Btn><Sp $w={8} /><Btn $w={26}><Cloud /></Btn><Sp $w={8} /><Btn $w={26}><Signal /></Btn><Sp $w={6} />
          <TextBtn $w={118} $gap={4} $pl={1} $on><AutoIcon />AutoTrading</TextBtn><Grip $w={10} />
          <Btn $w={36}><BarChart /></Btn><Btn $w={31} $on><CandleChart /></Btn><Sp $w={3} /><Btn $w={33}><LineChart /></Btn><Sep $w={4} />
          <Btn $w={35}><Magnifier /></Btn><Btn $w={34}><Magnifier minus /></Btn><Btn $w={34}><Tile /></Btn><Sep $w={6} /><Sp $w={2} />
          <Btn $w={31} $on><AutoScroll /></Btn><Sp $w={3} /><Btn $w={31} $on><Shift /></Btn><Sep $w={8} /><Sp $w={4} />
          <Btn $w={26}><Indicators /></Btn><Dd $w={12} /><Sp $w={8} />
          <Btn $w={26}><Clock /></Btn><Dd $w={13} /><Sp $w={9} />
          <Btn $w={26}><Template /></Btn><Dd $w={12} />
        </ToolBar>
        <RightTools>
          <Search />
          <ChatBox><Bubble /><Badge>1</Badge></ChatBox>
        </RightTools>
      </ToolRow>
      <ToolRow $h={34} $b={2}>
        <ToolBar $w={679} $pt={2}>
          <Sp $w={5} />
          <Btn $w={32} $on><Cursor /></Btn><Btn $w={36}><Thin /></Btn><Sep $w={2} />
          <Btn $w={40}><VLine /></Btn><Btn $w={28}><HLine /></Btn><Btn $w={40}><Trend /></Btn><Btn $w={26}><Equi /></Btn>
          <Btn $w={44}><FibIcon /></Btn><Btn $w={24}><TextA /></Btn><Btn $w={44}><TextT /></Btn><Btn $w={28}><Arrows /></Btn>
          <Dd $w={7} /><Sp $w={3} /><Grip $w={10} />
          <Tf $w={38}>M1</Tf><Tf $w={30}>M5</Tf><Tf $w={38}>M15</Tf><Tf $w={32}>M30</Tf><Tf $w={34}>H1</Tf><Tf $w={34}>H4</Tf>
          <Sp $w={2} /><Tf $w={31} $on>D1</Tf><Tf $w={38}>W1</Tf><Tf $w={28}>MN</Tf>
        </ToolBar>
      </ToolRow>
      <ChartArea>
        <Chart />
        <RightStrip />
      </ChartArea>
      <Tabs>
        {TABS.map(([t, w, on]) => <Tab key={t} $w={w} $on={on}>{t}</Tab>)}
        <TabArrows><TabArrow $dir="l" /><TabArrow $dir="r" /></TabArrows>
      </Tabs>
      <Terminal>
        <TermSide><CloseX>x</CloseX><SideBlue /></TermSide>
        <Grid>
          {HEADS.map(([h, left], i) => (
            <Head key={i} $left={left}>
              {h}
              {i === 1 && <SortMark viewBox="0 0 8 7"><path d="M.5.500h7L4 6.500z" fill="#fff" stroke="#999" /></SortMark>}
            </Head>
          ))}
          <Cell $left><DocIcon />2128635654</Cell>
          <Cell>2025.06.11 23:36:31</Cell>
          <Cell>buy</Cell>
          <Cell>0.26</Cell>
          <Cell>euraudp</Cell>
          <Cell>1.76655</Cell>
          <Cell>1.77483</Cell>
          <Cell $bg="#64f05f">1.78000</Cell>
          <Cell>2025.06.12 12:53:26</Cell>
          <Cell>1.78000</Cell>
          <Cell>-5.37</Cell>
          <Cell>196.46</Cell>
        </Grid>
        <Scroll>
          <ScrollUp><svg width="10" height="7" viewBox="0 0 10 7"><path d="M1 6l4-4 4 4" fill="none" stroke="#555" strokeWidth="1.300" /></svg></ScrollUp>
          <Thumb><ThumbLine /><ThumbLine /><ThumbLine /></Thumb>
        </Scroll>
        <StripR />
      </Terminal>
    </Page>
  );
}
